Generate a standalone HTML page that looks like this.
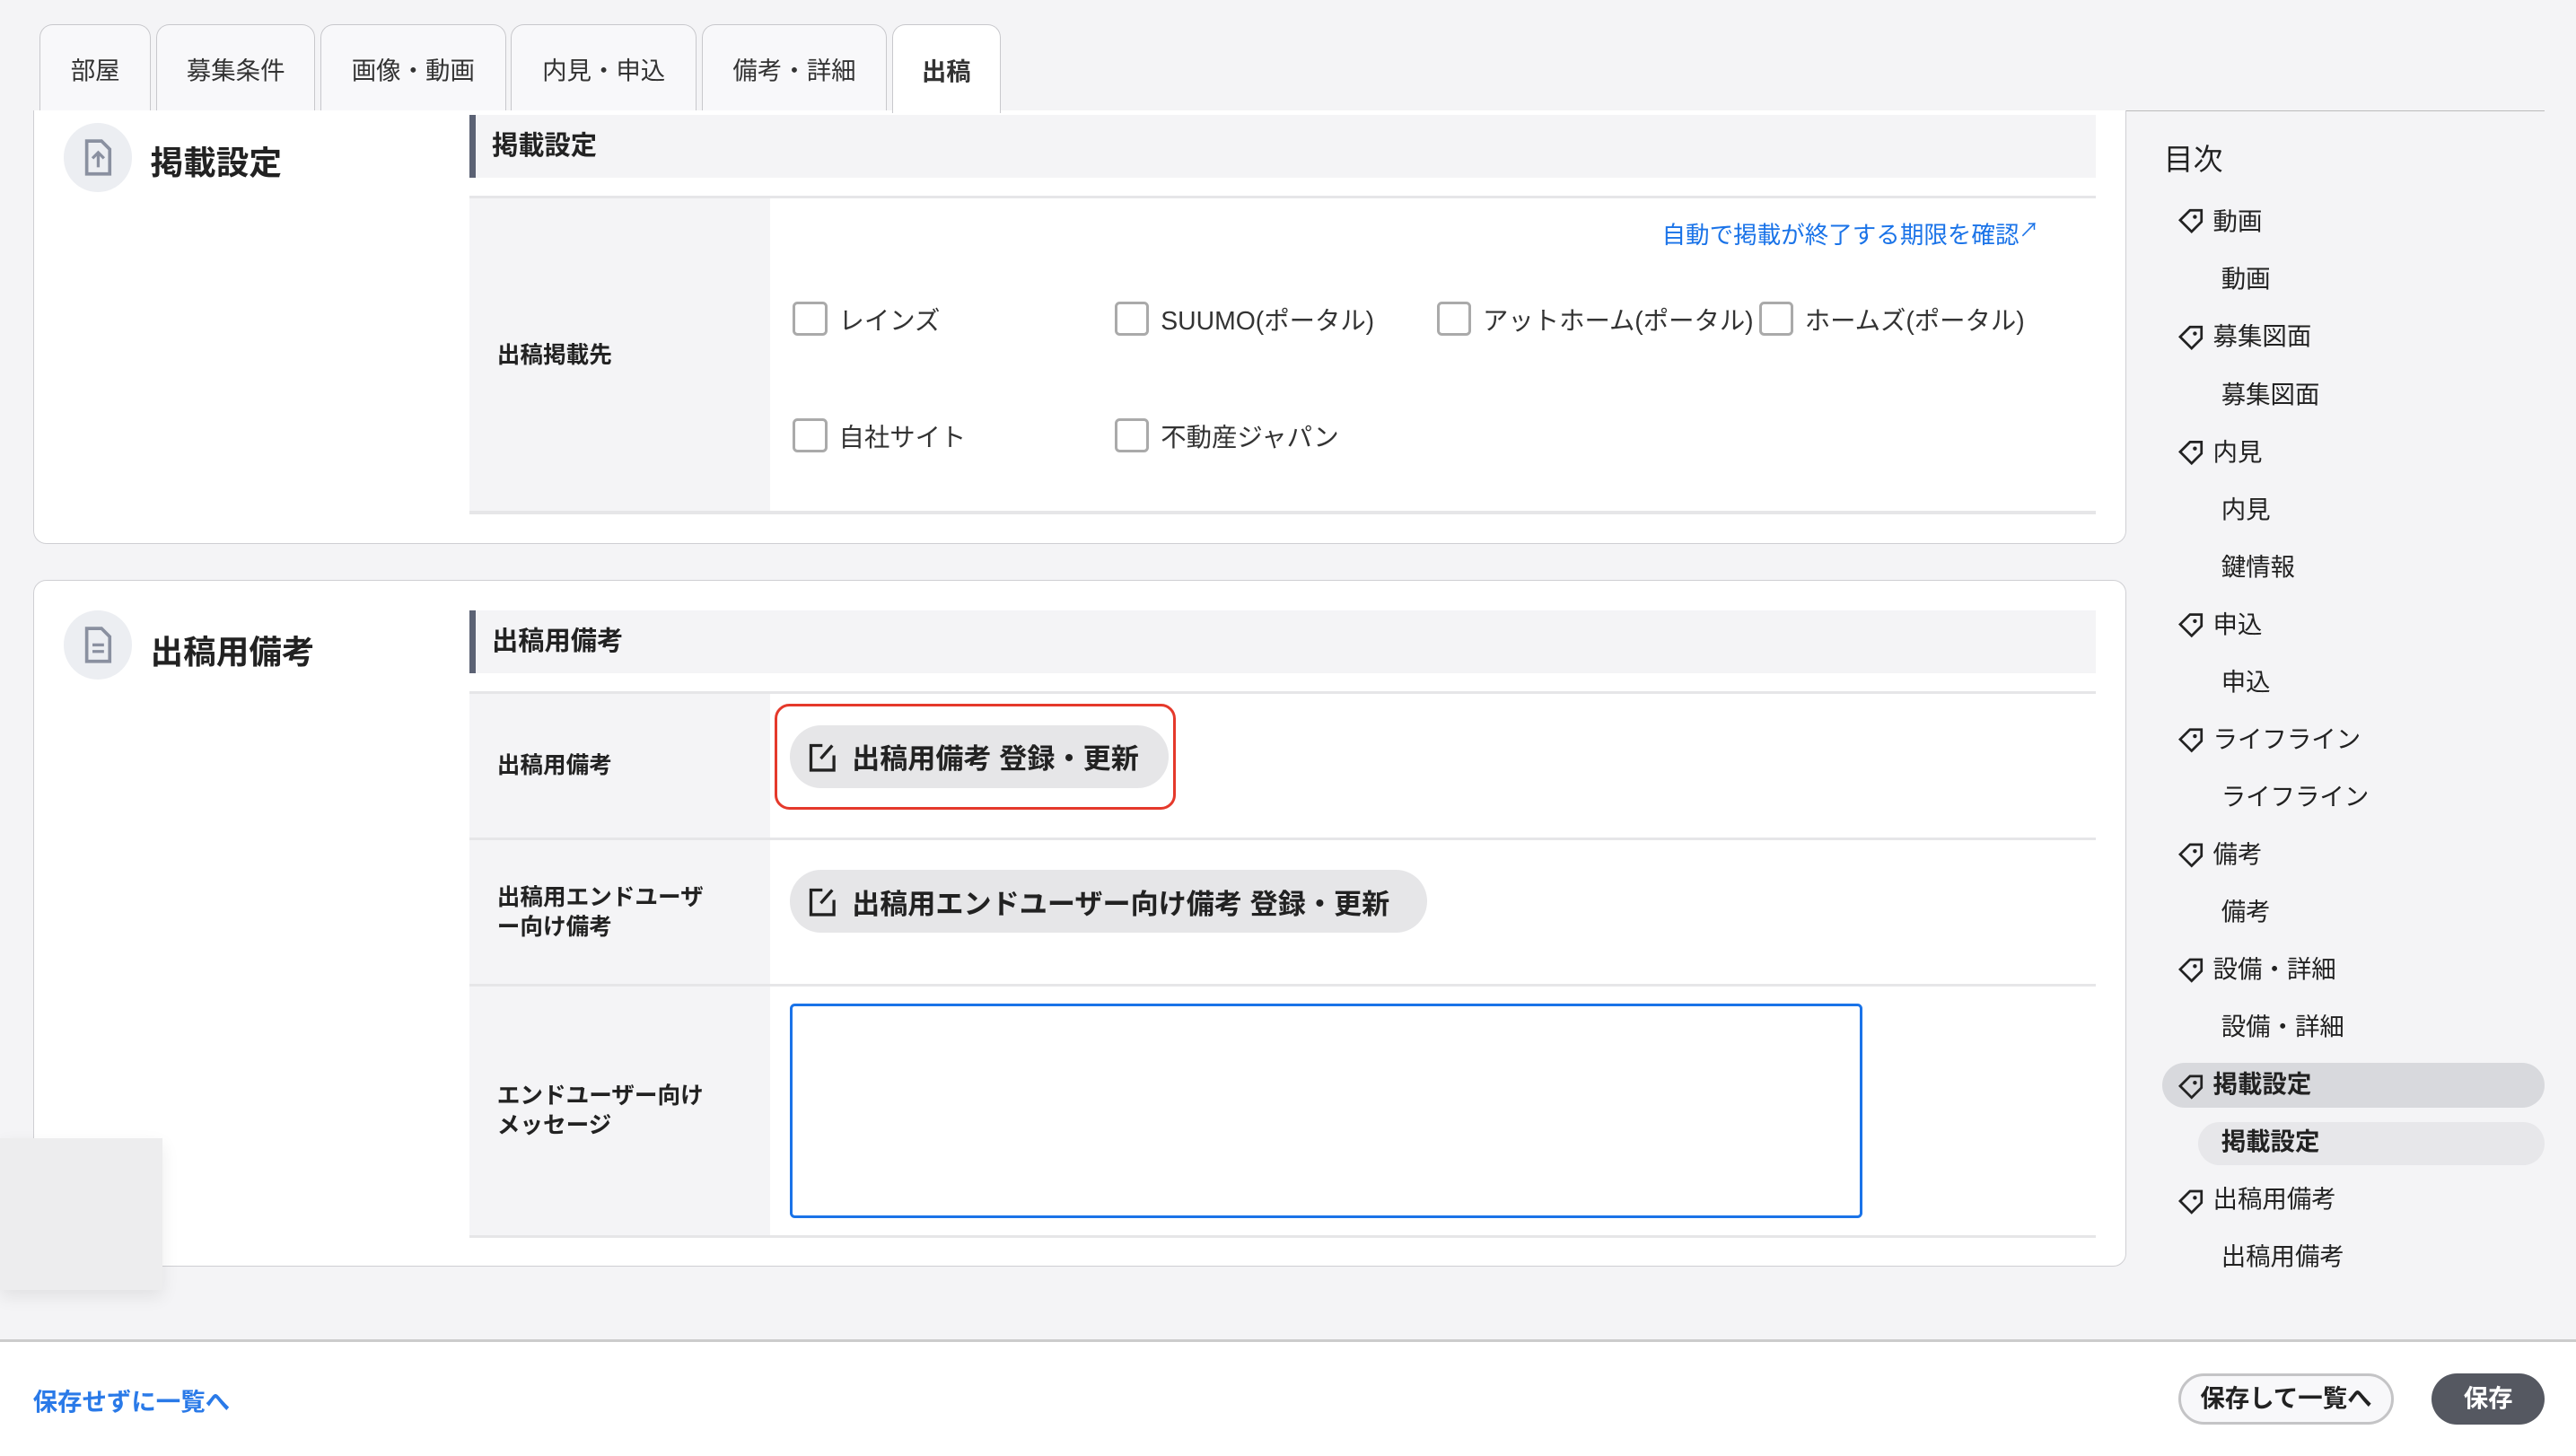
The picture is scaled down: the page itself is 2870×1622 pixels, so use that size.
<!DOCTYPE html>
<html><head><meta charset="utf-8"><style>
*{box-sizing:border-box;margin:0;padding:0}
html,body{width:2870px;height:1622px;overflow:hidden;background:#f4f4f6}
#r{position:absolute;left:0;top:0;width:1568px;height:886px;zoom:1.8304;font-family:"Liberation Sans","Noto Sans CJK JP",sans-serif;color:#222;}
.a{position:absolute}
.tab{position:absolute;top:15px;height:53px;border:1px solid #c8c8cc;border-bottom:none;border-radius:8px 8px 0 0;background:#f8f8fa;font-size:15px;color:#333;display:flex;align-items:center;justify-content:center}
.card{position:absolute;left:20px;width:1274px;background:#fff;border:1px solid #cfcfd3}
.ic{position:absolute;left:18px;width:42px;height:42px;border-radius:50%;background:#eceef2}
.ttl{position:absolute;left:71px;font-size:20px;font-weight:bold}
.hd{position:absolute;left:265px;width:990px;height:38px;background:#f4f4f6;border-left:4px solid #5b6274;font-size:16px;font-weight:bold;padding-left:10px;line-height:38px}
.lab{position:absolute;left:265px;width:183px;background:#f4f4f6;font-size:14px;font-weight:bold;padding-left:17px;display:flex;align-items:center;line-height:18px}
.ln{position:absolute;left:265px;width:990px;height:2px;background:#e6e6e8}
.cb{position:absolute;font-size:15.5px;color:#333;display:flex;align-items:center;height:22px}
.cb i{display:inline-block;width:21px;height:21px;border:2px solid #aaa;border-radius:3px;margin-right:7px}
.btn{position:absolute;height:38px;border-radius:19px;background:#e6e6e8;font-size:17px;font-weight:bold;display:flex;align-items:center;padding-left:10px}
.toc{position:absolute;font-size:15px;color:#222;height:26px;line-height:26px}
</style></head><body><div id="r">
<div class="tab" style="left:24px;width:68px">部屋</div>
<div class="tab" style="left:95px;width:97px">募集条件</div>
<div class="tab" style="left:195px;width:113px">画像・動画</div>
<div class="tab" style="left:311px;width:113px">内見・申込</div>
<div class="tab" style="left:427px;width:113px">備考・詳細</div>
<div class="a" style="left:20px;top:67px;width:1529px;height:1px;background:#bbb"></div>
<div class="tab" style="left:543px;width:66px;background:#fff;font-weight:bold;height:54px;z-index:3">出稿</div>

<div class="card" style="top:67px;height:264px;border-top:none;border-radius:0 0 8px 8px">
 <div class="ic" style="top:8px"><svg width="42" height="42" viewBox="0 0 42 42"><path d="M14 11h9l5 5v15h-14z" fill="none" stroke="#8a90a0" stroke-width="2"/><path d="M21 27v-9M17.5 21.5l3.5-3.5 3.5 3.5" fill="none" stroke="#8a90a0" stroke-width="1.8"/></svg></div>
 <div class="ttl" style="top:16px">掲載設定</div>
 <div class="hd" style="top:3px">掲載設定</div>
 <div class="ln" style="top:52px"></div>
 <div class="lab" style="top:54px;height:191px">出稿掲載先</div>
 <div class="ln" style="top:244px"></div>
 <div class="a" style="left:991px;top:64px;font-size:14.5px;color:#1a73e8">自動で掲載が終了する期限を確認<span style="font-size:12px;vertical-align:top">↗</span></div>
 <div class="cb" style="left:462px;top:116px"><i></i>レインズ</div>
 <div class="cb" style="left:658px;top:116px"><i></i>SUUMO(ポータル)</div>
 <div class="cb" style="left:854px;top:116px"><i></i>アットホーム(ポータル)</div>
 <div class="cb" style="left:1050px;top:116px"><i></i>ホームズ(ポータル)</div>
 <div class="cb" style="left:462px;top:187px"><i></i>自社サイト</div>
 <div class="cb" style="left:658px;top:187px"><i></i>不動産ジャパン</div>
</div>

<div class="card" style="top:353px;height:418px;border-radius:8px">
 <div class="ic" style="top:18px"><svg width="42" height="42" viewBox="0 0 42 42"><path d="M14 11h9l5 5v15h-14z" fill="none" stroke="#8a90a0" stroke-width="2"/><path d="M17.5 21h7M17.5 25h7" stroke="#8a90a0" stroke-width="1.8"/></svg></div>
 <div class="ttl" style="top:27px">出稿用備考</div>
 <div class="hd" style="top:18px">出稿用備考</div>
 <div class="ln" style="top:67px"></div>
 <div class="lab" style="top:69px;height:88px">出稿用備考</div>
 <div class="ln" style="top:156px"></div>
 <div class="lab" style="top:158px;height:88px">出稿用エンドユーザ<br>ー向け備考</div>
 <div class="ln" style="top:245px"></div>
 <div class="lab" style="top:247px;height:152px">エンドユーザー向け<br>メッセージ</div>
 <div class="ln" style="top:398px"></div>
 <div class="a" style="left:451px;top:75px;width:244px;height:64px;border:2px solid #e5392b;border-radius:9px"></div>
 <div class="btn" style="left:460px;top:88px;width:231px"><svg width="20" height="20" viewBox="0 0 20 20" style="margin-right:8px"><path d="M10 3H3v15h14V9" fill="none" stroke="#222" stroke-width="1.8"/><path d="M9 11l7-8" stroke="#222" stroke-width="1.8"/></svg>出稿用備考 登録・更新</div>
 <div class="btn" style="left:460px;top:176px;width:388px"><svg width="20" height="20" viewBox="0 0 20 20" style="margin-right:8px"><path d="M10 3H3v15h14V9" fill="none" stroke="#222" stroke-width="1.8"/><path d="M9 11l7-8" stroke="#222" stroke-width="1.8"/></svg>出稿用エンドユーザー向け備考 登録・更新</div>
 <div class="a" style="left:460px;top:257px;width:653px;height:131px;border:2px solid #1a73e8;border-radius:3px"></div>
</div>

<div class="a" style="left:0;top:693px;width:99px;height:92px;background:#ededee;box-shadow:0 4px 10px rgba(0,0,0,.08)"></div>

<div class="a" style="left:0;top:815px;width:1568px;height:71px;background:#fff;border-top:2px solid #ccc"></div>
<div class="a" style="left:20px;top:841px;font-size:15px;font-weight:bold;color:#2a7ae8">保存せずに一覧へ</div>
<div class="a" style="left:1326px;top:836px;width:131px;height:31px;border:2px solid #c4c4c6;border-radius:16px;background:#f8f8fa;font-size:15px;font-weight:bold;text-align:center;line-height:27px">保存して一覧へ</div>
<div class="a" style="left:1480px;top:836px;width:69px;height:31px;border-radius:16px;background:#555861;color:#fff;font-size:15px;font-weight:bold;text-align:center;line-height:31px">保存</div>

<div class="a" style="left:1317px;top:83px;font-size:18px">目次</div>
<div class="a" style="left:1316px;top:647px;width:233px;height:27px;border-radius:14px;background:#d8d9dd"></div>
<div class="a" style="left:1338px;top:683px;width:211px;height:26px;border-radius:13px;background:#e7e7ea"></div>
<svg class="a" style="left:0;top:0" width="1568" height="886">
<g fill="none" stroke="#222" stroke-width="1.5">
<path id="t" d="M1327 134l6-6h7v7l-6 6z"/>
<use href="#t" y="71"/><use href="#t" y="141"/><use href="#t" y="246"/><use href="#t" y="316"/><use href="#t" y="386"/><use href="#t" y="456"/><use href="#t" y="527"/><use href="#t" y="597"/>
</g>
<g fill="#222"><circle id="d" cx="1336" cy="132" r="1.2"/><use href="#d" y="71"/><use href="#d" y="141"/><use href="#d" y="246"/><use href="#d" y="316"/><use href="#d" y="386"/><use href="#d" y="456"/><use href="#d" y="527"/><use href="#d" y="597"/></g>
</svg>
<div class="toc" style="left:1347px;top:122px">動画</div>
<div class="toc" style="left:1352px;top:157px">動画</div>
<div class="toc" style="left:1347px;top:192px">募集図面</div>
<div class="toc" style="left:1352px;top:227px">募集図面</div>
<div class="toc" style="left:1347px;top:262px">内見</div>
<div class="toc" style="left:1352px;top:297px">内見</div>
<div class="toc" style="left:1352px;top:332px">鍵情報</div>
<div class="toc" style="left:1347px;top:367px">申込</div>
<div class="toc" style="left:1352px;top:402px">申込</div>
<div class="toc" style="left:1347px;top:437px">ライフライン</div>
<div class="toc" style="left:1352px;top:472px">ライフライン</div>
<div class="toc" style="left:1347px;top:507px">備考</div>
<div class="toc" style="left:1352px;top:542px">備考</div>
<div class="toc" style="left:1347px;top:577px">設備・詳細</div>
<div class="toc" style="left:1352px;top:612px">設備・詳細</div>
<div class="toc" style="left:1347px;top:647px;font-weight:bold">掲載設定</div>
<div class="toc" style="left:1352px;top:682px;font-weight:bold">掲載設定</div>
<div class="toc" style="left:1347px;top:717px">出稿用備考</div>
<div class="toc" style="left:1352px;top:752px">出稿用備考</div>
</div></body></html>
